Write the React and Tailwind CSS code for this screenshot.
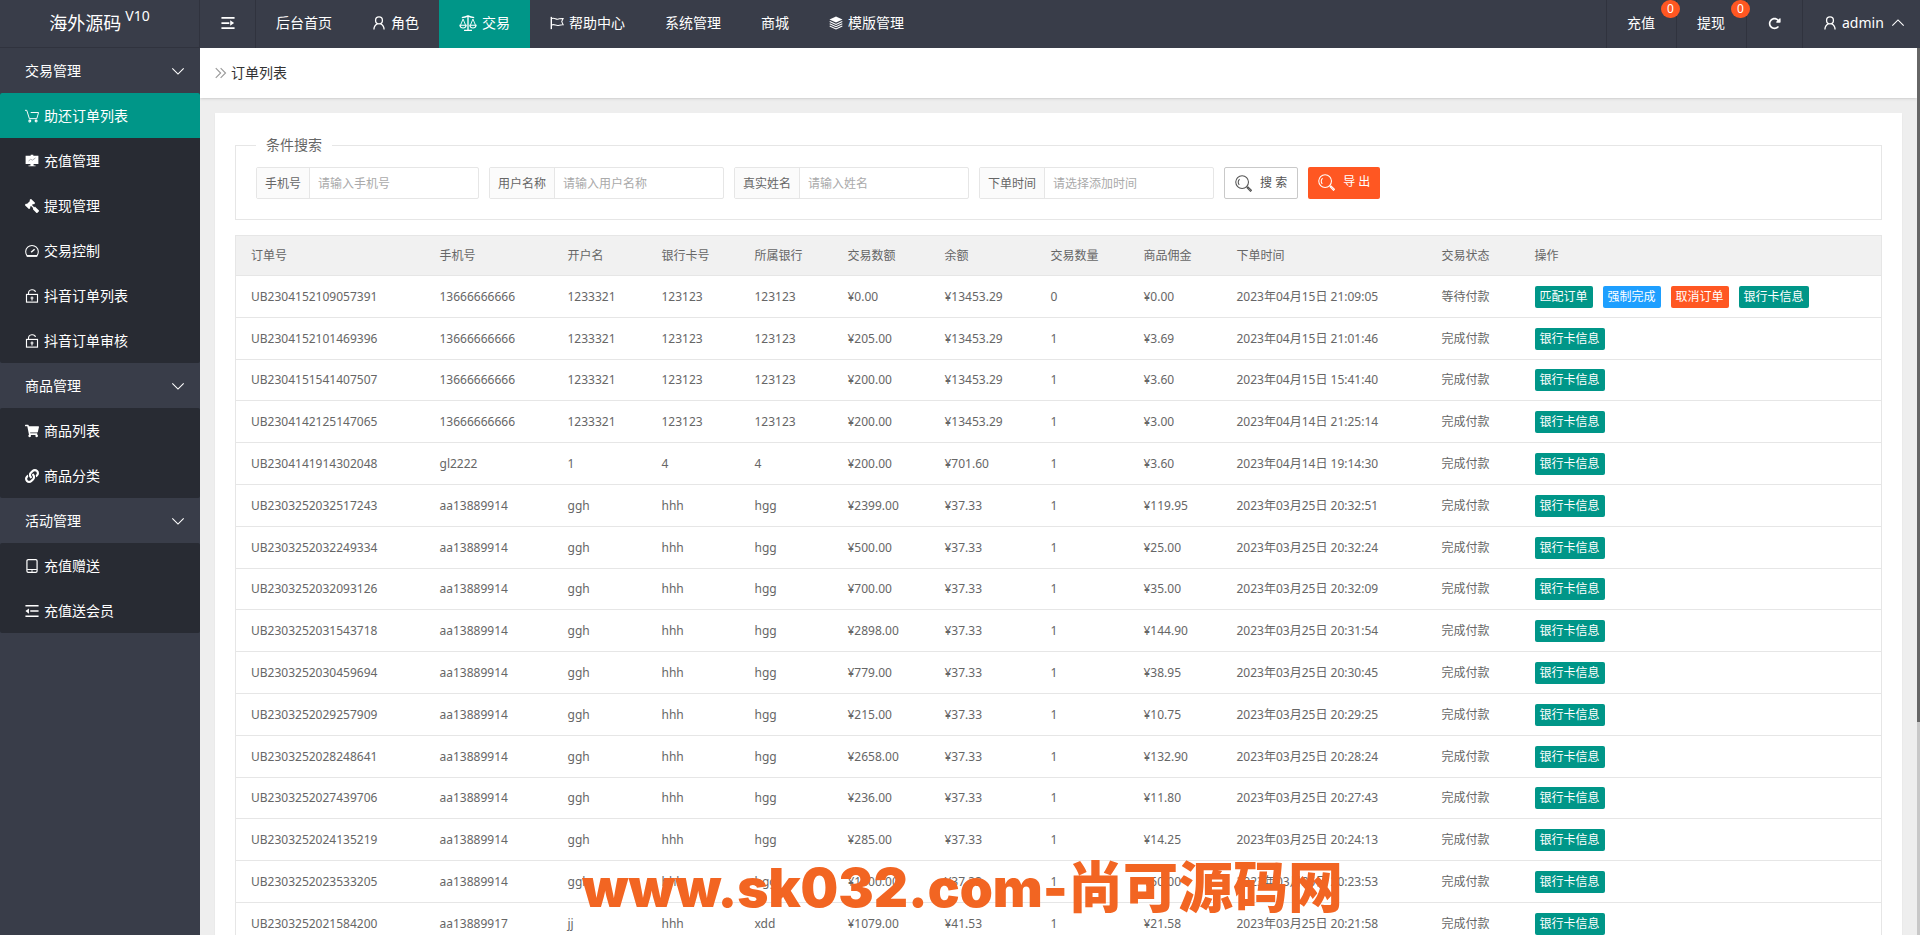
import React from 'react';
import { FaGavel, FaLink, FaShoppingCart } from 'react-icons/fa';
import { FaRotateRight } from 'react-icons/fa6';

const Svg = ({ size = 14, children, className = '' }) => (
  <svg
    width={size}
    height={size}
    viewBox="0 0 16 16"
    fill="none"
    stroke="currentColor"
    strokeWidth="1.2"
    className={`shrink-0 ${className}`}
    aria-hidden="true"
  >
    {children}
  </svg>
);

const MenuIcon = () => (
  <Svg>
    <path d="M.5 2.2h15M.5 8h9M.5 13.800h15" strokeWidth="2" />
    <path d="M10.500 4.800v6.400L15 8z" fill="currentColor" stroke="none" />
  </Svg>
);

const UserIcon = () => (
  <Svg>
    <circle cx="8" cy="5" r="3.9" strokeWidth="1.5" />
    <path d="M2.2 15.5c0-3.6 2-5.8 4-6.6M13.8 15.5c0-3.6-2-5.8-4-6.6" strokeWidth="1.5" />
  </Svg>
);

const ScaleIcon = () => (
  <Svg size={18}>
    <path d="M8 1v13.500M2.500 3.200c2-.2 3.500-.5 5.500-1.600 2 1.100 3.500 1.400 5.500 1.600M4.500 14.500h7" />
    <path d="M3.600 4.500L1.300 10M3.600 4.500L5.900 10M12.400 4.500L10.100 10M12.400 4.500l2.300 5.500" strokeWidth=".8" />
    <path d="M.8 10h5.600c-.3 1.800-1.300 2.400-2.800 2.400S1.100 11.800.8 10zM9.600 10h5.600c-.3 1.800-1.300 2.400-2.800 2.400s-2.500-.6-2.800-2.400z" strokeWidth="1" />
  </Svg>
);

const FlagIcon = () => (
  <Svg>
    <path d="M1.500 1v14" strokeWidth="1.600" />
    <path d="M2 2.800c3-1.200 4.500 1.200 7 .8 2-.3 3-1 6-.8l-1.600 3.600L15 10c-3-.2-4.200.6-6 .8-2.500.2-4-1.800-7-.6" />
  </Svg>
);

const LayersIcon = () => (
  <Svg>
    <path d="M8 .5l7.500 3.500L8 7.500.5 4z" fill="currentColor" stroke="none" />
    <path d="M.8 6.300L8 9.600l7.200-3.300M.8 8.900L8 12.200l7.200-3.300M.8 11.500L8 14.800l7.200-3.300" />
  </Svg>
);

const ChevronDown = () => (
  <Svg className="ml-auto">
    <path d="M1.500 5L8 11.500 14.500 5" strokeWidth="1.300" />
  </Svg>
);

const ChevronUp = () => (
  <Svg>
    <path d="M1.500 11L8 4.500l6.500 6.500" strokeWidth="1.300" />
  </Svg>
);

const CartIcon = () => (
  <Svg>
    <path d="M0 1.500h2l3 9.500h8.500l2-7H6.500" strokeWidth="1.100" />
    <circle cx="5.500" cy="13.800" r="1.100" />
    <circle cx="12.700" cy="13.800" r="1.100" />
  </Svg>
);

const BoardIcon = () => (
  <Svg>
    <path d="M6.500.8h3V2h5.800v9.500H9.800v1.500H12v1H4v-1h2.200v-1.500H.7V2h5.800z" fill="currentColor" stroke="none" />
    <path d="M4 8l2.500-2 2 1 3.500-2.500" stroke="#9a9ca1" strokeWidth="1" />
  </Svg>
);

const GavelIcon = () => <FaGavel size={14} className="-scale-x-100" />;

const GaugeIcon = () => (
  <Svg>
    <path d="M2.500 13.500A7.200 7.200 0 1 1 13.500 13.500z" strokeWidth="1.200" />
    <path d="M2 13.700h12" strokeWidth="2" />
    <path d="M7 9.500L11 6" strokeWidth="1.700" />
  </Svg>
);

const LockIcon = () => (
  <Svg>
    <rect x="1.700" y="6.200" width="12.600" height="8.800" strokeWidth="1.300" />
    <path d="M4 6.200V4.800c0-5 7.200-5 8-1.500M8 8.500v4.500M6.300 10.300h3.400" strokeWidth="1.300" />
  </Svg>
);

const PhoneIcon = () => (
  <Svg>
    <rect x="2.200" y=".7" width="11.600" height="14.600" rx="1.500" strokeWidth="1.400" />
    <path d="M2.500 12h11M7 13.700h2" />
  </Svg>
);

const OutdentIcon = () => (
  <Svg>
    <path d="M.5 2h15M6 8h9.500M.5 14h15" strokeWidth="1.700" />
    <path d="M.5 8l4-3v6z" fill="currentColor" stroke="none" />
  </Svg>
);

const SearchIcon = () => (
  <Svg size={17}>
    <circle cx="6.700" cy="6.700" r="6" strokeWidth="1" />
    <path d="M4 9.300A3.700 3.700 0 0 1 4.300 4" strokeWidth="1" />
    <path d="M10.900 10.900l1 1M11.500 12.200l.8-.8 3.200 3-.9 1z" strokeWidth="1" />
  </Svg>
);

const CrumbIcon = () => (
  <Svg size={12} className="text-[#999]">
    <path d="M1 1.500L7.500 8 1 14.500M7.500 1.500L14 8l-6.500 6.500" strokeWidth="1.500" />
  </Svg>
);

const navItems = [
  { name: '后台首页' },
  { name: '角色', icon: UserIcon },
  { name: '交易', icon: ScaleIcon, active: true },
  { name: '帮助中心', icon: FlagIcon },
  { name: '系统管理' },
  { name: '商城' },
  { name: '模版管理', icon: LayersIcon },
];

const menuGroups = [
  {
    name: '交易管理',
    items: [
      { name: '助还订单列表', icon: CartIcon, active: true },
      { name: '充值管理', icon: BoardIcon },
      { name: '提现管理', icon: GavelIcon },
      { name: '交易控制', icon: GaugeIcon },
      { name: '抖音订单列表', icon: LockIcon },
      { name: '抖音订单审核', icon: LockIcon },
    ],
  },
  {
    name: '商品管理',
    items: [
      { name: '商品列表', icon: FaShoppingCart },
      { name: '商品分类', icon: FaLink },
    ],
  },
  {
    name: '活动管理',
    items: [
      { name: '充值赠送', icon: PhoneIcon },
      { name: '充值送会员', icon: OutdentIcon },
    ],
  },
];

const filters = [
  { id: 'tel', label: '手机号', placeholder: '请输入手机号' },
  { id: 'username', label: '用户名称', placeholder: '请输入用户名称' },
  { id: 'realname', label: '真实姓名', placeholder: '请输入姓名' },
  { id: 'addtime', label: '下单时间', placeholder: '请选择添加时间' },
];

const columns = [
  { name: '订单号', width: 'w-[189px]' },
  { name: '手机号', width: 'w-[128px]' },
  { name: '开户名', width: 'w-[94px]' },
  { name: '银行卡号', width: 'w-[93px]' },
  { name: '所属银行', width: 'w-[93px]' },
  { name: '交易数额', width: 'w-[97px]' },
  { name: '余额', width: 'w-[106px]' },
  { name: '交易数量', width: 'w-[93px]' },
  { name: '商品佣金', width: 'w-[93px]' },
  { name: '下单时间', width: 'w-[205px]' },
  { name: '交易状态', width: 'w-[93px]' },
  { name: '操作', width: '' },
];

const orders = [
  ['UB2304152109057391', '13666666666', '1233321', '123123', '123123', '¥0.00', '¥13453.29', '0', '¥0.00', '2023年04月15日 21:09:05', '等待付款'],
  ['UB2304152101469396', '13666666666', '1233321', '123123', '123123', '¥205.00', '¥13453.29', '1', '¥3.69', '2023年04月15日 21:01:46', '完成付款'],
  ['UB2304151541407507', '13666666666', '1233321', '123123', '123123', '¥200.00', '¥13453.29', '1', '¥3.60', '2023年04月15日 15:41:40', '完成付款'],
  ['UB2304142125147065', '13666666666', '1233321', '123123', '123123', '¥200.00', '¥13453.29', '1', '¥3.00', '2023年04月14日 21:25:14', '完成付款'],
  ['UB2304141914302048', 'gl2222', '1', '4', '4', '¥200.00', '¥701.60', '1', '¥3.60', '2023年04月14日 19:14:30', '完成付款'],
  ['UB2303252032517243', 'aa13889914', 'ggh', 'hhh', 'hgg', '¥2399.00', '¥37.33', '1', '¥119.95', '2023年03月25日 20:32:51', '完成付款'],
  ['UB2303252032249334', 'aa13889914', 'ggh', 'hhh', 'hgg', '¥500.00', '¥37.33', '1', '¥25.00', '2023年03月25日 20:32:24', '完成付款'],
  ['UB2303252032093126', 'aa13889914', 'ggh', 'hhh', 'hgg', '¥700.00', '¥37.33', '1', '¥35.00', '2023年03月25日 20:32:09', '完成付款'],
  ['UB2303252031543718', 'aa13889914', 'ggh', 'hhh', 'hgg', '¥2898.00', '¥37.33', '1', '¥144.90', '2023年03月25日 20:31:54', '完成付款'],
  ['UB2303252030459694', 'aa13889914', 'ggh', 'hhh', 'hgg', '¥779.00', '¥37.33', '1', '¥38.95', '2023年03月25日 20:30:45', '完成付款'],
  ['UB2303252029257909', 'aa13889914', 'ggh', 'hhh', 'hgg', '¥215.00', '¥37.33', '1', '¥10.75', '2023年03月25日 20:29:25', '完成付款'],
  ['UB2303252028248641', 'aa13889914', 'ggh', 'hhh', 'hgg', '¥2658.00', '¥37.33', '1', '¥132.90', '2023年03月25日 20:28:24', '完成付款'],
  ['UB2303252027439706', 'aa13889914', 'ggh', 'hhh', 'hgg', '¥236.00', '¥37.33', '1', '¥11.80', '2023年03月25日 20:27:43', '完成付款'],
  ['UB2303252024135219', 'aa13889914', 'ggh', 'hhh', 'hgg', '¥285.00', '¥37.33', '1', '¥14.25', '2023年03月25日 20:24:13', '完成付款'],
  ['UB2303252023533205', 'aa13889914', 'ggh', 'hhh', 'hgg', '¥1000.00', '¥37.33', '1', '¥50.00', '2023年03月25日 20:23:53', '完成付款'],
  ['UB2303252021584200', 'aa13889917', 'jj', 'hhh', 'xdd', '¥1079.00', '¥41.53', '1', '¥21.58', '2023年03月25日 20:21:58', '完成付款'],
];

const Header = () => (
  <header className="h-12 flex items-stretch shrink-0 bg-[#393d49] text-white text-sm">
    <div className="w-[200px] flex items-center justify-center shrink-0 pb-0.5 border-r border-b border-[#30333e] text-lg">
      海外源码
      <sup className="ml-1 text-sm">V10</sup>
    </div>
    <button type="button" aria-label="菜单" className="w-14 flex items-center justify-center pb-0.5 border-r border-[#30333e]">
      <MenuIcon />
    </button>
    <nav className="flex">
      {navItems.map((item) => (
        <a
          key={item.name}
          href="#"
          className={`flex items-center gap-[5px] px-5 pb-0.5 ${item.active ? 'bg-[#009688]' : ''}`}
        >
          {item.icon && <item.icon />}
          <span>{item.name}</span>
        </a>
      ))}
    </nav>
    <div className="ml-auto flex">
      {['充值', '提现'].map((name) => (
        <a key={name} href="#" className="relative w-[70px] flex items-center px-5 pb-0.5 border-l border-[#30333e]">
          {name}
          <span className="absolute z-10 top-0 left-[54px] w-[19px] h-[18px] rounded-full bg-[#ff5722] text-xs leading-[18px] text-center">
            0
          </span>
        </a>
      ))}
      <button type="button" aria-label="刷新" className="w-14 flex items-center justify-center pb-0.5 border-l border-[#30333e]">
        <FaRotateRight size={13} />
      </button>
      <button type="button" className="w-[118px] flex items-center gap-[5px] pl-5 pb-0.5 border-l border-[#30333e]">
        <UserIcon />
        admin
        <span className="ml-0.5">
          <ChevronUp />
        </span>
      </button>
    </div>
  </header>
);

const Sidebar = () => (
  <aside className="w-[200px] shrink-0 bg-[#393d49] text-white text-sm">
    {menuGroups.map((group) => (
      <div key={group.name}>
        <button type="button" className="w-full h-[45px] flex items-center pl-[25px] pr-[15px]">
          {group.name}
          <ChevronDown />
        </button>
        <div className="rounded-xs overflow-hidden bg-[#282b33]">
          {group.items.map((item) => (
            <a
              key={item.name}
              href="#"
              className={`h-[45px] flex items-center gap-[5px] pl-[25px] ${item.active ? 'bg-[#009688]' : ''}`}
            >
              <item.icon size={14} />
              {item.name}
            </a>
          ))}
        </div>
      </div>
    ))}
  </aside>
);

const SearchForm = () => (
  <fieldset className="border border-[#e6e6e6] px-5 pb-5">
    <legend className="px-[10px] text-sm leading-5">条件搜索</legend>
    <form className="flex flex-wrap gap-[10px] pt-3 text-xs">
      {filters.map((f) => (
        <div key={f.id} className="flex h-8 border border-[#e6e6e6] rounded-xs">
          <label htmlFor={f.id} className="flex items-center px-2 pt-0.5 bg-[#fbfbfb] border-r border-[#e6e6e6]">
            {f.label}
          </label>
          <input
            id={f.id}
            type="text"
            placeholder={f.placeholder}
            className="w-[168px] px-2 pt-0.5 outline-none placeholder:text-[#aaa]"
          />
        </div>
      ))}
      <button type="button" className="flex items-center gap-2 h-8 px-[10px] border border-[#c9c9c9] rounded-xs text-[#555]">
        <SearchIcon />
        搜 索
      </button>
      <button type="button" className="flex items-center gap-2 h-8 px-[10px] pb-0.5 rounded-xs bg-[#ff5722] text-white">
        <SearchIcon />
        导 出
      </button>
    </form>
  </fieldset>
);

const Action = ({ color, children }) => (
  <a href="#" className={`h-[22px] px-[5px] rounded-xs text-white leading-[22px] ${color}`}>
    {children}
  </a>
);

const OrderTable = () => (
  <table className="w-full mt-[15px] table-fixed border-collapse border border-[#e6e6e6] text-xs text-left">
    <thead>
      <tr className="h-10 bg-[#f1f1f1] border-b border-[#e6e6e6]">
        {columns.map((col) => (
          <th key={col.name} className={`pl-[15px] font-normal ${col.width}`}>
            {col.name}
          </th>
        ))}
      </tr>
    </thead>
    <tbody>
      {orders.map((order) => (
        <tr key={order[0]} className="h-[42px] nth-[5n+3]:h-[41px] border-b border-[#e6e6e6]">
          {order.map((value, i) => (
            <td key={columns[i].name} className="pl-[15px] whitespace-nowrap">
              {value}
            </td>
          ))}
          <td className="pl-[15px]">
            <div className="flex gap-[10px]">
              {order[10] === '等待付款' && (
                <>
                  <Action color="bg-[#009688]">匹配订单</Action>
                  <Action color="bg-[#1e9fff]">强制完成</Action>
                  <Action color="bg-[#ff5722]">取消订单</Action>
                </>
              )}
              <Action color="bg-[#009688]">银行卡信息</Action>
            </div>
          </td>
        </tr>
      ))}
    </tbody>
  </table>
);

export default function App() {
  return (
    <div className="relative h-screen flex flex-col overflow-hidden bg-[#eee] text-[#666] font-['Noto_Sans','Noto_Sans_CJK_SC',sans-serif]">
      <Header />
      <div className="flex-1 min-h-0 flex">
        <Sidebar />
        <main className="flex-1 min-w-0 overflow-hidden">
          <div className="h-[50px] flex items-center gap-1 px-[15px] bg-white shadow text-sm text-[#333]">
            <CrumbIcon />
            订单列表
          </div>
          <div className="m-[15px] px-5 pt-[22px] pb-5 bg-white shadow-xs">
            <SearchForm />
            <OrderTable />
          </div>
        </main>
        {/* Scrollbar */}
        <div className="w-[3px] shrink-0 bg-[#c8c8c8]">
          <div className="h-[76%] bg-[#666]" />
        </div>
      </div>
      {/* Watermark */}
      <div className="absolute left-[582px] bottom-5 flex items-baseline whitespace-nowrap pointer-events-none text-[#f26522] font-black leading-none">
        <span className="font-[Inter] text-[53px]">www.sk032.com-</span>
        <span className="text-[55px]">尚可源码网</span>
      </div>
    </div>
  );
}
